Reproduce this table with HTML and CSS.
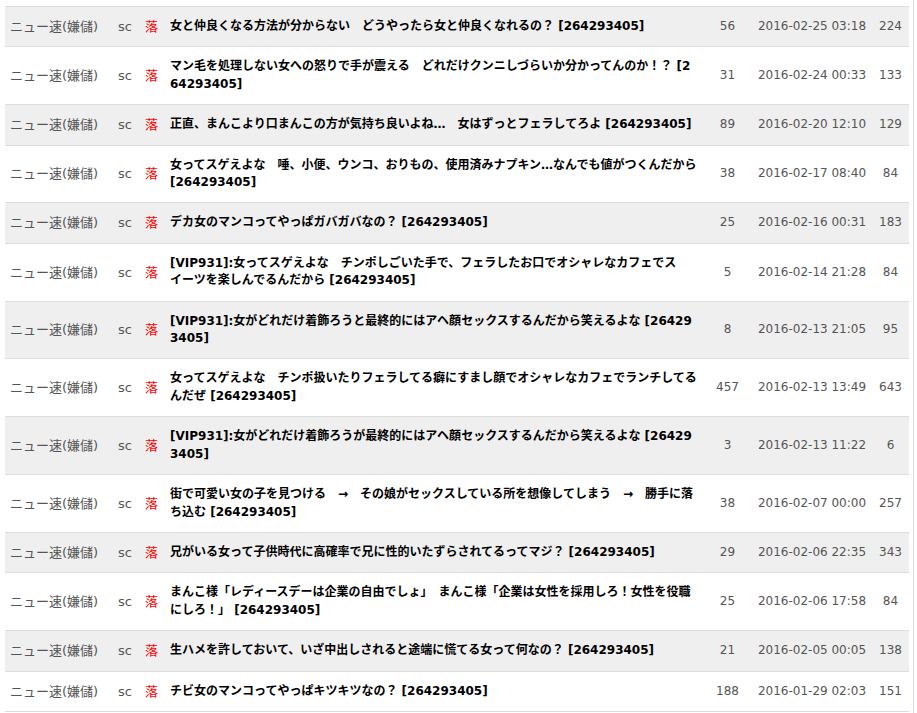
FILE: index.html
```html
<!DOCTYPE html>
<html lang="ja">
<head>
<meta charset="utf-8">
<title>スレッド一覧</title>
<link rel="stylesheet" href="styles.css">
</head>
<body>
<div class="wrap">
<table class="threads">
<colgroup>
<col class="c-board"><col class="c-site"><col class="c-mark"><col class="c-title"><col class="c-res"><col class="c-date"><col class="c-cnt">
</colgroup>
<tbody>
<tr><td class="board">ニュー速(嫌儲)</td><td class="site">sc</td><td class="mark">落</td><td class="title">女と仲良くなる方法が分からない　どうやったら女と仲良くなれるの？ [264293405]</td><td class="num">56</td><td class="date">2016-02-25 03:18</td><td class="num">224</td></tr>
<tr><td class="board">ニュー速(嫌儲)</td><td class="site">sc</td><td class="mark">落</td><td class="title">マン毛を処理しない女への怒りで手が震える　どれだけクンニしづらいか分かってんのか！？ [264293405]</td><td class="num">31</td><td class="date">2016-02-24 00:33</td><td class="num">133</td></tr>
<tr><td class="board">ニュー速(嫌儲)</td><td class="site">sc</td><td class="mark">落</td><td class="title">正直、まんこより口まんこの方が気持ち良いよね…　女はずっとフェラしてろよ [264293405]</td><td class="num">89</td><td class="date">2016-02-20 12:10</td><td class="num">129</td></tr>
<tr><td class="board">ニュー速(嫌儲)</td><td class="site">sc</td><td class="mark">落</td><td class="title">女ってスゲえよな　唾、小便、ウンコ、おりもの、使用済みナプキン…なんでも値がつくんだから [264293405]</td><td class="num">38</td><td class="date">2016-02-17 08:40</td><td class="num">84</td></tr>
<tr><td class="board">ニュー速(嫌儲)</td><td class="site">sc</td><td class="mark">落</td><td class="title">デカ女のマンコってやっぱガバガバなの？ [264293405]</td><td class="num">25</td><td class="date">2016-02-16 00:31</td><td class="num">183</td></tr>
<tr><td class="board">ニュー速(嫌儲)</td><td class="site">sc</td><td class="mark">落</td><td class="title">[VIP931]:女ってスゲえよな　チンポしごいた手で、フェラしたお口でオシャレなカフェでスイーツを楽しんでるんだから [264293405]</td><td class="num">5</td><td class="date">2016-02-14 21:28</td><td class="num">84</td></tr>
<tr><td class="board">ニュー速(嫌儲)</td><td class="site">sc</td><td class="mark">落</td><td class="title">[VIP931]:女がどれだけ着飾ろうと最終的にはアヘ顔セックスするんだから笑えるよな [264293405]</td><td class="num">8</td><td class="date">2016-02-13 21:05</td><td class="num">95</td></tr>
<tr><td class="board">ニュー速(嫌儲)</td><td class="site">sc</td><td class="mark">落</td><td class="title">女ってスゲえよな　チンポ扱いたりフェラしてる癖にすまし顔でオシャレなカフェでランチしてるんだぜ [264293405]</td><td class="num">457</td><td class="date">2016-02-13 13:49</td><td class="num">643</td></tr>
<tr><td class="board">ニュー速(嫌儲)</td><td class="site">sc</td><td class="mark">落</td><td class="title">[VIP931]:女がどれだけ着飾ろうが最終的にはアヘ顔セックスするんだから笑えるよな [264293405]</td><td class="num">3</td><td class="date">2016-02-13 11:22</td><td class="num">6</td></tr>
<tr><td class="board">ニュー速(嫌儲)</td><td class="site">sc</td><td class="mark">落</td><td class="title">街で可愛い女の子を見つける　→　その娘がセックスしている所を想像してしまう　→　勝手に落ち込む [264293405]</td><td class="num">38</td><td class="date">2016-02-07 00:00</td><td class="num">257</td></tr>
<tr><td class="board">ニュー速(嫌儲)</td><td class="site">sc</td><td class="mark">落</td><td class="title">兄がいる女って子供時代に高確率で兄に性的いたずらされてるってマジ？ [264293405]</td><td class="num">29</td><td class="date">2016-02-06 22:35</td><td class="num">343</td></tr>
<tr><td class="board">ニュー速(嫌儲)</td><td class="site">sc</td><td class="mark">落</td><td class="title">まんこ様「レディースデーは企業の自由でしょ」　まんこ様「企業は女性を採用しろ！女性を役職にしろ！」 [264293405]</td><td class="num">25</td><td class="date">2016-02-06 17:58</td><td class="num">84</td></tr>
<tr><td class="board">ニュー速(嫌儲)</td><td class="site">sc</td><td class="mark">落</td><td class="title">生ハメを許しておいて、いざ中出しされると途端に慌てる女って何なの？ [264293405]</td><td class="num">21</td><td class="date">2016-02-05 00:05</td><td class="num">138</td></tr>
<tr><td class="board">ニュー速(嫌儲)</td><td class="site">sc</td><td class="mark">落</td><td class="title">チビ女のマンコってやっぱキツキツなの？ [264293405]</td><td class="num">188</td><td class="date">2016-01-29 02:03</td><td class="num">151</td></tr>
</tbody>
</table>
</div>
</body>
</html>
```

FILE: styles.css
```css
html, body {
  margin: 0;
  padding: 0;
  background: #fff;
}

body {
  font-family: "DejaVu Sans", "Noto Sans CJK JP", sans-serif;
  font-size: 12px;
  color: #555;
}

.wrap {
  box-sizing: border-box;
  width: 914px;
  min-height: 713px;
  padding: 6px 4px 0 5px;
  border-right: 1px solid #ddd;
}

.threads {
  width: 904px;
  table-layout: fixed;
  border-collapse: collapse;
  border-top: 1px solid #ddd;
}

.c-board { width: 108px; }
.c-site { width: 27px; }
.c-mark { width: 25px; }
.c-title { width: 538px; }
.c-res { width: 49px; }
.c-date { width: 120px; }
.c-cnt { width: 37px; }

.threads tr {
  border-bottom: 1px solid #ddd;
}

.threads tr:nth-child(odd) {
  background: #efefef;
}

.threads td {
  padding: 11px 5px;
  line-height: 17.4px;
  vertical-align: middle;
}

.board {
  font-size: 13px;
  color: #555;
  white-space: nowrap;
}

.site {
  font-size: 13px;
  color: #555;
}

.mark {
  font-size: 13px;
  color: #f00;
}

.title {
  font-weight: bold;
  color: #000;
  word-break: break-all;
  line-break: strict;
}

.num {
  text-align: center;
  color: #555;
}

.date {
  text-align: center;
  color: #555;
  white-space: nowrap;
}
```
